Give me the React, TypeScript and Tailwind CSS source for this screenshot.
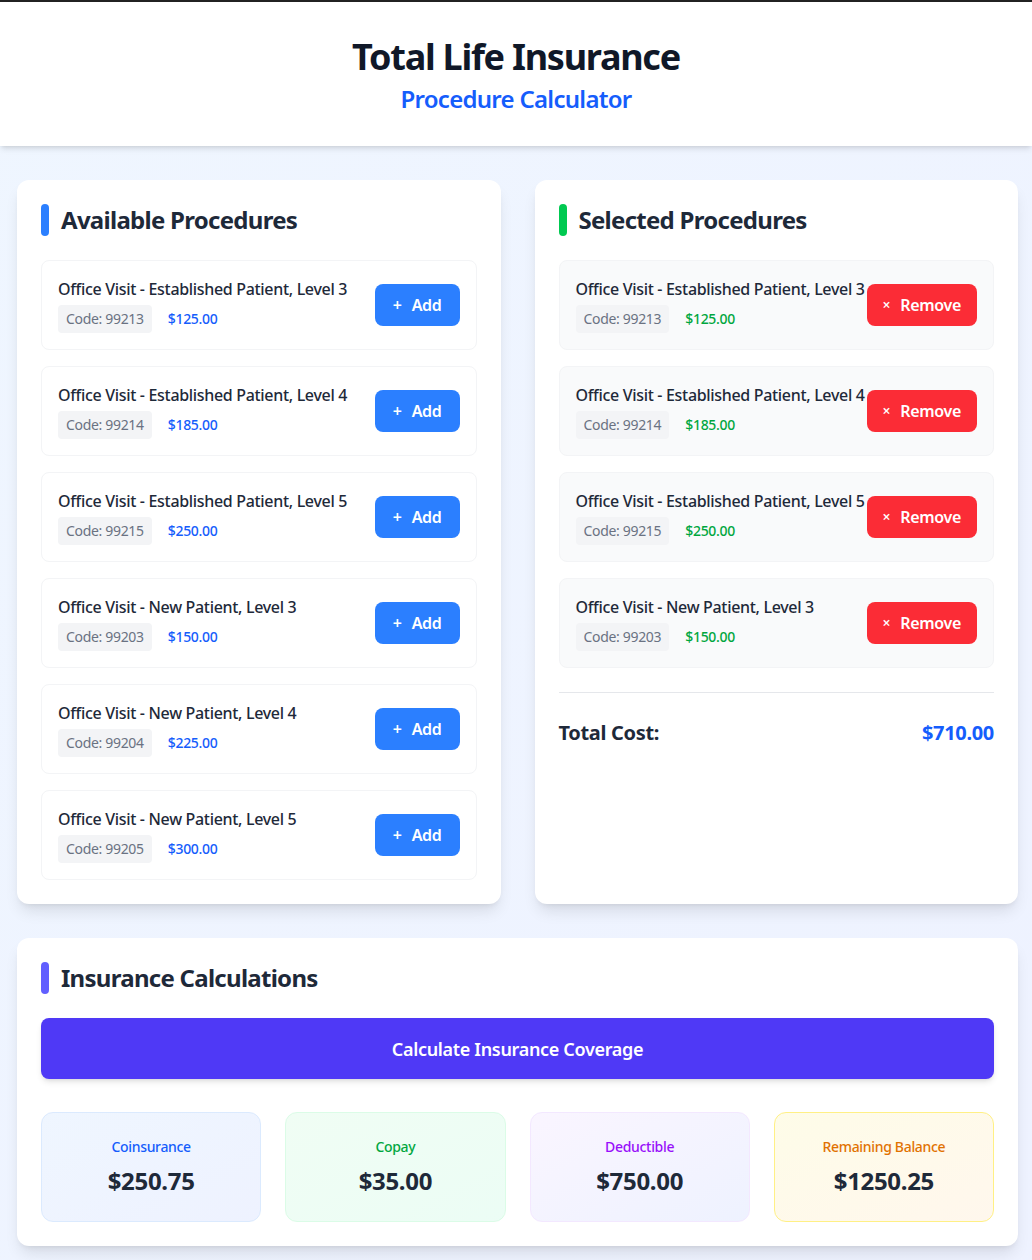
import React from 'react';

type Procedure = {
  code: string;
  name: string;
  price: number;
};

const available: Procedure[] = [
  { code: '99213', name: 'Office Visit - Established Patient, Level 3', price: 125 },
  { code: '99214', name: 'Office Visit - Established Patient, Level 4', price: 185 },
  { code: '99215', name: 'Office Visit - Established Patient, Level 5', price: 250 },
  { code: '99203', name: 'Office Visit - New Patient, Level 3', price: 150 },
  { code: '99204', name: 'Office Visit - New Patient, Level 4', price: 225 },
  { code: '99205', name: 'Office Visit - New Patient, Level 5', price: 300 },
];

const selected = available.slice(0, 4);

const money = (n: number) => `$${n.toFixed(2)}`;

function SectionTitle({ title, bar }: { title: string; bar: string }) {
  return (
    <div className="flex items-center mb-6">
      <span className={`w-2 h-8 rounded-full ${bar}`}></span>
      <h2 className="ml-3 text-2xl font-bold text-gray-800 tracking-[-0.03em]">{title}</h2>
    </div>
  );
}

export default function App() {
  const total = selected.reduce((sum, p) => sum + p.price, 0);

  return (
    <div
      className="min-h-screen bg-gradient-to-br from-blue-50 to-indigo-50 border-t-2 border-[#222] tracking-[-0.02em]"
      style={{ fontFamily: '"Noto Sans", "Open Sans", sans-serif' }}
    >
      {/* Header */}
      <header className="bg-white shadow-md pt-[35px] pb-[31px] text-center">
        <h1 className="text-4xl font-bold text-gray-900 tracking-[-0.035em]">Total Life Insurance</h1>
        <p className="mt-1.5 text-2xl font-semibold text-blue-600 tracking-[-0.03em]">Procedure Calculator</p>
      </header>

      <main className="pl-[17px] pr-[14px] pt-[34px] pb-[14px] flex flex-col gap-[34px]">
        <div className="grid grid-cols-2 gap-[34px]">
          {/* Available Procedures */}
          <section className="bg-white rounded-xl shadow-lg p-6">
            <SectionTitle title="Available Procedures" bar="bg-blue-500" />
            <div className="space-y-4">
              {available.map((p) => (
                <div key={p.code} className="flex items-center justify-between border border-gray-100 rounded-lg p-4">
                  <div>
                    <h3 className="text-base font-medium text-gray-800">{p.name}</h3>
                    <div className="mt-1 flex items-center">
                      <span className="bg-gray-100 text-gray-500 text-sm px-2 py-1 rounded">Code: {p.code}</span>
                      <span className="ml-4 text-sm font-medium text-blue-600">{money(p.price)}</span>
                    </div>
                  </div>
                  <button className="bg-blue-500 text-white font-semibold px-[18px] py-[9px] rounded-lg flex items-center shrink-0">
                    <span className="text-base mr-2.5">+</span> Add
                  </button>
                </div>
              ))}
            </div>
          </section>

          {/* Selected Procedures */}
          <section className="bg-white rounded-xl shadow-lg p-6">
            <SectionTitle title="Selected Procedures" bar="bg-green-500" />
            <div className="space-y-4">
              {selected.map((p) => (
                <div key={p.code} className="flex items-center justify-between bg-gray-50 border border-gray-100 rounded-lg p-4">
                  <div>
                    <h3 className="text-base font-medium text-gray-800">{p.name}</h3>
                    <div className="mt-1 flex items-center">
                      <span className="bg-gray-100 text-gray-500 text-sm px-2 py-1 rounded">Code: {p.code}</span>
                      <span className="ml-4 text-sm font-medium text-green-600">{money(p.price)}</span>
                    </div>
                  </div>
                  <button className="bg-red-500 text-white font-semibold px-4 py-[9px] rounded-lg flex items-center shrink-0">
                    <span className="text-sm mr-2.5">×</span> Remove
                  </button>
                </div>
              ))}
            </div>
            <div className="mt-6 pt-[26px] border-t border-gray-200 flex items-center justify-between">
              <span className="text-xl font-bold text-gray-800">Total Cost:</span>
              <span className="text-xl font-bold text-blue-600">{money(total)}</span>
            </div>
          </section>
        </div>

        {/* Insurance Calculations */}
        <section className="bg-white rounded-xl shadow-lg p-6">
          <SectionTitle title="Insurance Calculations" bar="bg-indigo-500" />
          <button className="w-full h-[61px] bg-indigo-600 text-white text-lg font-semibold rounded-lg shadow-md">
            Calculate Insurance Coverage
          </button>
          <div className="mt-[33px] grid grid-cols-4 gap-6">
            <div className="bg-gradient-to-br from-blue-50 to-indigo-50 border border-blue-100 rounded-xl p-6 text-center">
              <p className="text-sm font-medium text-blue-600">Coinsurance</p>
              <p className="mt-2 text-2xl font-bold text-gray-800">$250.75</p>
            </div>
            <div className="bg-gradient-to-br from-green-50 to-emerald-50 border border-green-100 rounded-xl p-6 text-center">
              <p className="text-sm font-medium text-green-600">Copay</p>
              <p className="mt-2 text-2xl font-bold text-gray-800">$35.00</p>
            </div>
            <div className="bg-gradient-to-br from-purple-50 to-indigo-50 border border-purple-100 rounded-xl p-6 text-center">
              <p className="text-sm font-medium text-purple-600">Deductible</p>
              <p className="mt-2 text-2xl font-bold text-gray-800">$750.00</p>
            </div>
            <div className="bg-gradient-to-br from-yellow-50 to-orange-50 border border-yellow-200 rounded-xl p-6 text-center">
              <p className="text-sm font-medium text-amber-600">Remaining Balance</p>
              <p className="mt-2 text-2xl font-bold text-gray-800">$1250.25</p>
            </div>
          </div>
        </section>
      </main>
    </div>
  );
}
